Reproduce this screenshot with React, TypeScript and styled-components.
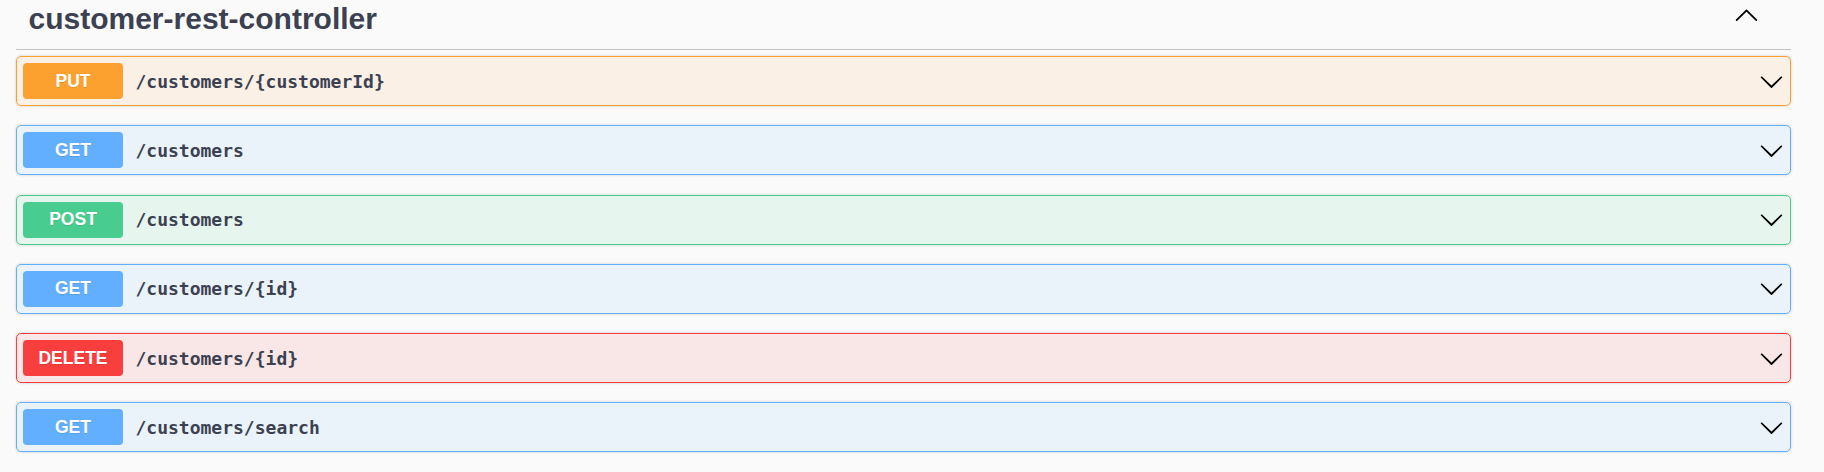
import React from 'react'
import styled, { createGlobalStyle } from 'styled-components'

const methodColors: Record<string, { main: string; bg: string }> = {
  PUT: { main: '#fca130', bg: 'rgba(252, 161, 48, 0.1)' },
  GET: { main: '#61affe', bg: 'rgba(97, 175, 254, 0.1)' },
  POST: { main: '#49cc90', bg: 'rgba(73, 204, 144, 0.1)' },
  DELETE: { main: '#f93e3e', bg: 'rgba(249, 62, 62, 0.1)' },
}

const operations = [
  { method: 'PUT', path: '/customers/{customerId}' },
  { method: 'GET', path: '/customers' },
  { method: 'POST', path: '/customers' },
  { method: 'GET', path: '/customers/{id}' },
  { method: 'DELETE', path: '/customers/{id}' },
  { method: 'GET', path: '/customers/search' },
]

const ArrowDown = () => (
  <svg width='25' height='25' viewBox='0 0 20 20' fill='#000'>
    <path d='M17.418 6.109c.272-.268.709-.268.979 0s.271.701 0 .969l-7.908 7.83c-.27.268-.707.268-.979 0l-7.908-7.83c-.27-.268-.27-.701 0-.969.271-.268.709-.268.979 0L10 13.25l7.418-7.141z' />
  </svg>
)

const ArrowUp = () => (
  <svg width='25' height='25' viewBox='0 0 20 20' fill='#000'>
    <path d='M17.418 14.908c.272.268.709.268.979 0s.271-.701 0-.969l-7.908-7.83c-.27-.268-.707-.268-.979 0l-7.908 7.83c-.27.268-.27.701 0 .969.271.268.709.268.979 0L10 7.767l7.418 7.141z' />
  </svg>
)

export default function App() {
  return (
    <>
      <GlobalStyle />
      <Wrapper>
        <TagHeader>
          <TagTitle>customer-rest-controller</TagTitle>
          <ToggleButton>
            <ArrowUp />
          </ToggleButton>
        </TagHeader>
        {operations.map((op, i) => (
          <OpBlock key={i} $method={op.method}>
            <Summary>
              <Method $method={op.method}>{op.method}</Method>
              <Path>{op.path}</Path>
              <ArrowDown />
            </Summary>
          </OpBlock>
        ))}
      </Wrapper>
    </>
  )
}

const GlobalStyle = createGlobalStyle`
  html, body {
    margin: 0;
    padding: 0;
    background: #fafafa;
  }
`

const Wrapper = styled.div`
  padding: 0 33px 0 16px;
  font-family: 'Liberation Sans', Arial, sans-serif;
`

const TagHeader = styled.div`
  display: flex;
  align-items: flex-start;
  justify-content: space-between;
  padding: 1px 25px 13px 12.5px;
  margin-bottom: 6px;
  border-bottom: 1px solid rgba(59, 65, 81, 0.3);
`

const TagTitle = styled.h3`
  margin: 0;
  font-size: 30px;
  line-height: 35px;
  font-weight: 700;
  color: #3b4151;
`

const ToggleButton = styled.div`
  display: flex;
  margin-top: 1px;
  margin-right: 7px;
`

const OpBlock = styled.div<{ $method: string }>`
  margin-bottom: 19.25px;
  border: 1px solid ${p => methodColors[p.$method].main};
  background: ${p => methodColors[p.$method].bg};
  border-radius: 5px;
  box-shadow: 0 0 3px rgba(0, 0, 0, 0.19);
`

const Summary = styled.div`
  display: flex;
  align-items: center;
  padding: 6px;
  height: 36px;
`

const Method = styled.span<{ $method: string }>`
  flex: none;
  width: 100px;
  height: 36px;
  display: flex;
  align-items: center;
  justify-content: center;
  border-radius: 4px;
  background: ${p => methodColors[p.$method].main};
  color: #fff;
  font-size: 17.5px;
  font-weight: 700;
  text-shadow: 0 1px 0 rgba(0, 0, 0, 0.1);
`

const Path = styled.span`
  flex: 1;
  padding: 0 12.5px;
  font-family: 'DejaVu Sans Mono', monospace;
  font-size: 18px;
  font-weight: 600;
  color: #3b4151;
`
